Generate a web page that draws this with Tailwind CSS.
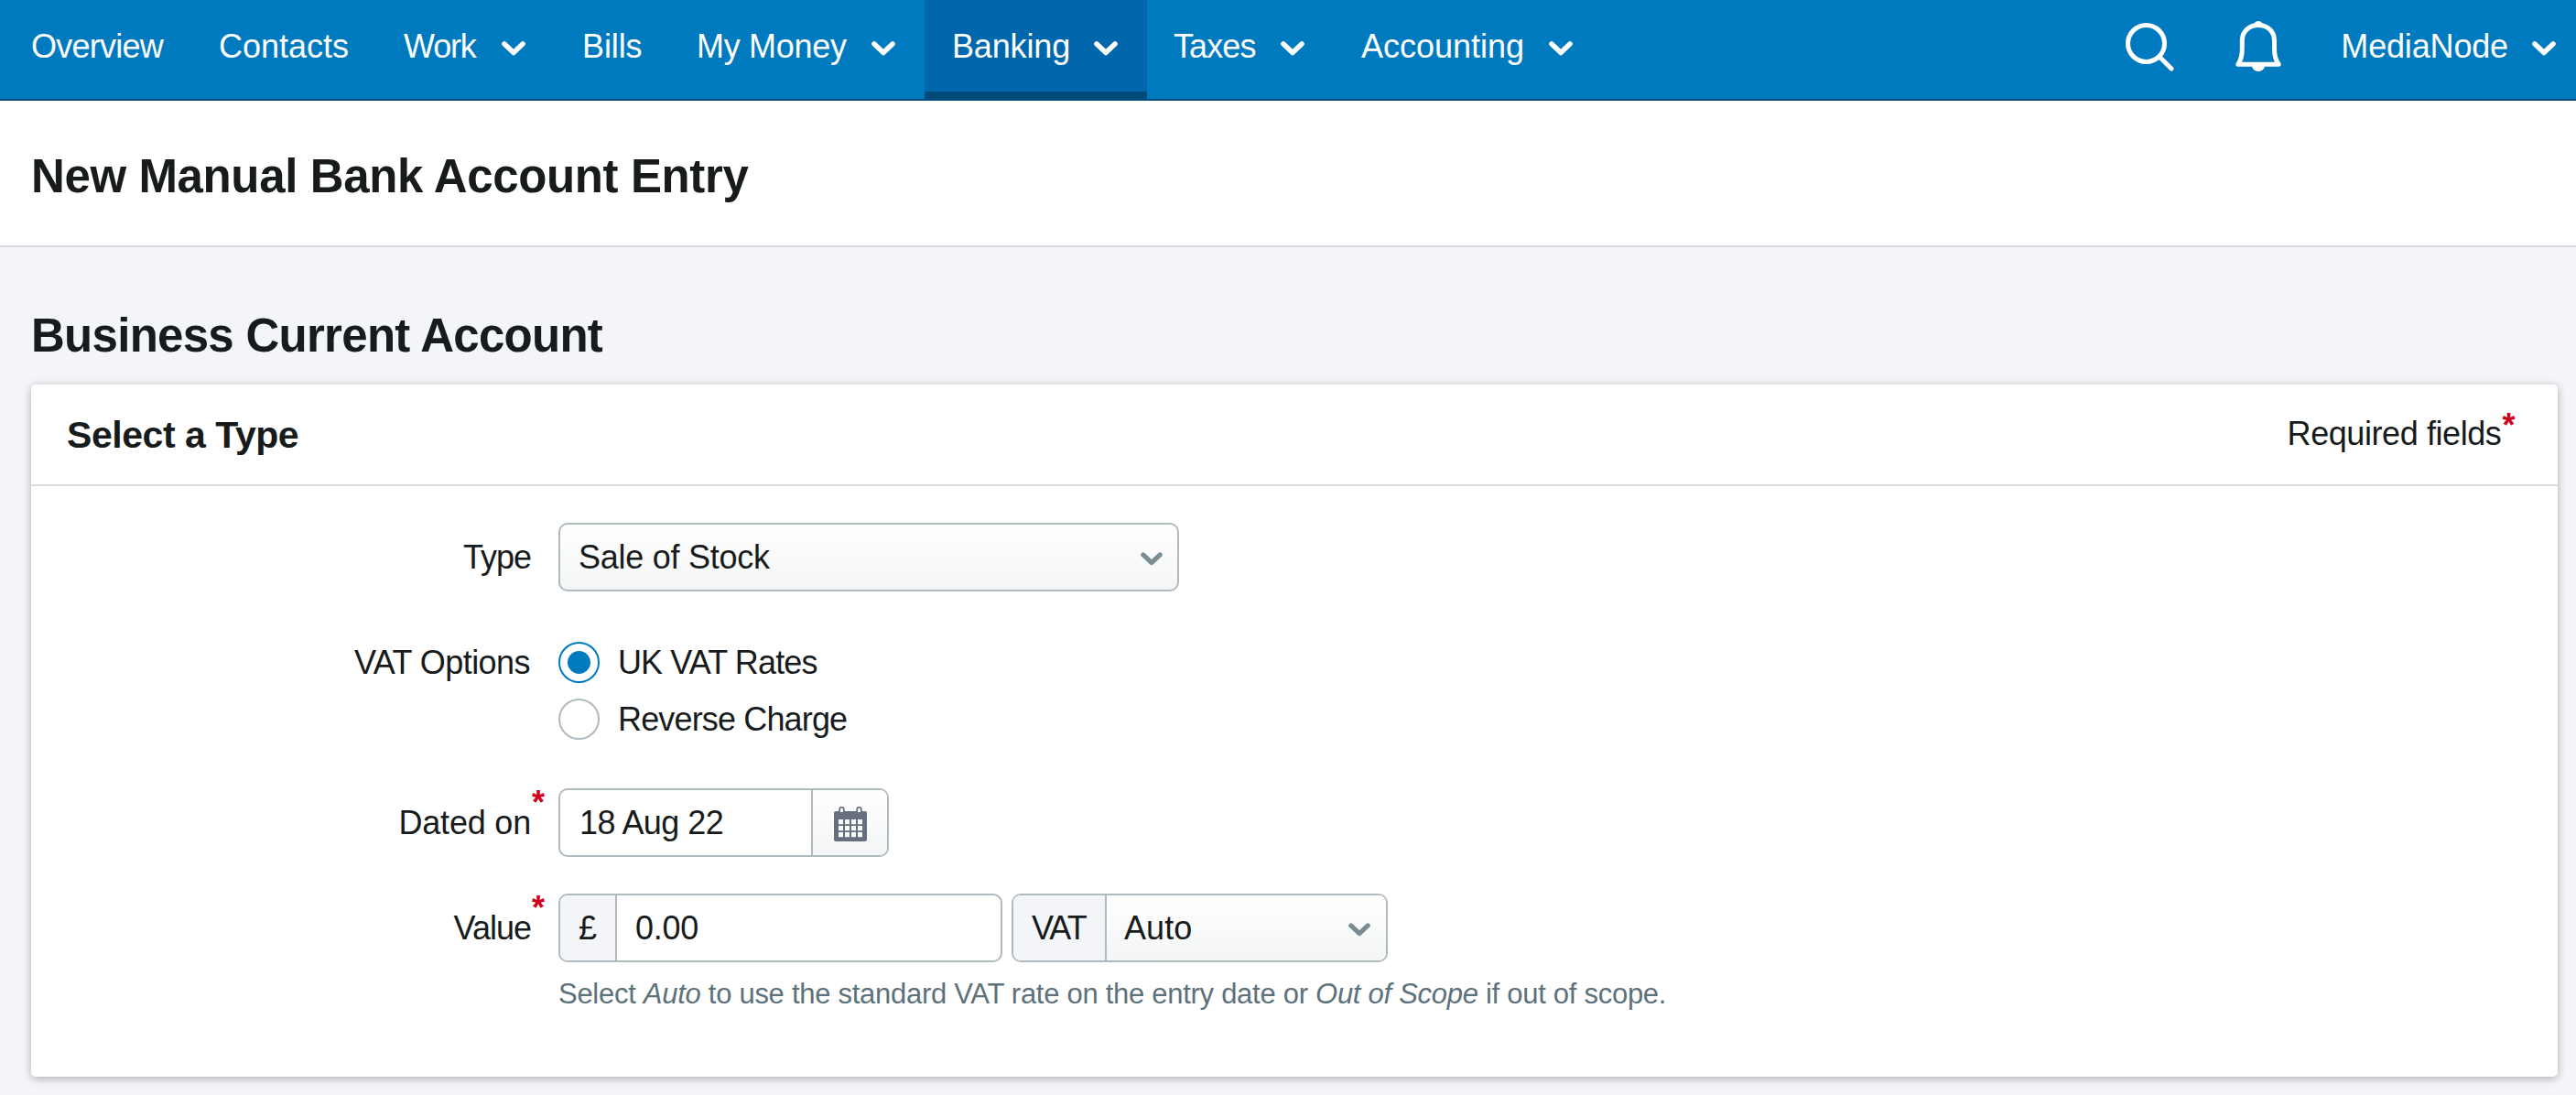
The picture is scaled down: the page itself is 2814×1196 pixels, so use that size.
<!DOCTYPE html>
<html lang="en">
<head>
    <meta charset="UTF-8">
    <meta name="viewport" content="width=device-width, initial-scale=1.0">
    <title>New Manual Bank Account Entry</title>
    <script src="https://cdn.jsdelivr.net/npm/@tailwindcss/browser@4"></script>
</head>
<body class="min-h-screen bg-[#f4f5f8] font-['Liberation_Sans',Arial,sans-serif] text-[36px] leading-none text-[#171b1c] whitespace-nowrap">

    <!-- Shared icons -->
    <svg class="hidden">
        <symbol id="chevron" viewBox="0 0 26 16">
            <path d="M3 3l10 9.500L23 3" fill="none" stroke="currentColor" stroke-width="5.500" stroke-linecap="round" stroke-linejoin="round"/>
        </symbol>
    </svg>

    <!-- Top navigation -->
    <nav class="flex h-[110px] justify-between border-b-2 border-[#004a7c] bg-[#007abf] pl-1 text-white">
        <div class="flex">
            <a href="#" class="flex h-[100px] w-[205px] items-center pt-0.5 pl-[30px] tracking-[-0.75px]">Overview</a>
            <a href="#" class="flex h-[100px] w-[203px] items-center pt-0.5 pl-[30px]">Contacts</a>
            <a href="#" class="flex h-[100px] w-[194px] items-center justify-between pt-0.5 pl-[29px] pr-8 tracking-[-1.2px]">Work <svg class="mt-[3px] h-4 w-[26px]"><use href="#chevron"/></svg></a>
            <a href="#" class="flex h-[100px] w-[125px] items-center pt-0.5 pl-[30px] tracking-[-0.1px]">Bills</a>
            <a href="#" class="flex h-[100px] w-[279px] items-center justify-between pt-0.5 pl-[30px] pr-8 tracking-[-0.3px]">My Money <svg class="mt-[3px] h-4 w-[26px]"><use href="#chevron"/></svg></a>
            <a href="#" class="box-content flex h-[98px] w-[181px] items-center justify-between border-b-8 border-[#004a7c] bg-[#0067ad] pt-0.5 pl-[30px] pr-8 tracking-[-0.15px]">Banking <svg class="mt-[3px] h-4 w-[26px]"><use href="#chevron"/></svg></a>
            <a href="#" class="flex h-[100px] w-[204px] items-center justify-between pt-0.5 pl-[29px] pr-8 tracking-[-0.9px]">Taxes <svg class="mt-[3px] h-4 w-[26px]"><use href="#chevron"/></svg></a>
            <a href="#" class="flex h-[100px] w-[291px] items-center justify-between pt-0.5 pl-[30px] pr-[30px]">Accounting <svg class="mt-[3px] h-4 w-[26px]"><use href="#chevron"/></svg></a>
        </div>
        <div class="flex h-[100px] items-center pr-[22px]">
            <svg class="mr-[66px] h-[56px] w-[54px]" viewBox="0 0 54 56" fill="none" stroke="currentColor" stroke-width="5" stroke-linecap="round">
                <circle cx="22.5" cy="25.5" r="20"/>
                <path d="M37.5 40.500L50 53"/>
            </svg>
            <svg class="mr-[65px] h-[56px] w-[50px]" viewBox="0 0 50 56">
                <path d="M2.800 48.200C6 44 7.300 38 7.300 31V22.500C7.300 12 15 5.500 25 5.500S42.500 12 42.500 22.500V31C42.500 38 44 44 47.200 48.200Z" fill="none" stroke="currentColor" stroke-width="5" stroke-linejoin="round"/>
                <path d="M20.500 4A4.700 4.300 0 0 1 29.500 4ZM18 50H32A7 6 0 0 1 18 50Z" fill="currentColor"/>
            </svg>
            <a href="#" class="flex items-center gap-[26px] pt-0.5 tracking-[-0.16px]">MediaNode <svg class="mt-[3px] h-4 w-[26px]"><use href="#chevron"/></svg></a>
        </div>
    </nav>

    <!-- Page title -->
    <header class="flex h-[160px] items-center border-b-2 border-[#d6dcdf] bg-white pt-[6px] pl-[34px]">
        <h1 class="text-[51px] font-bold tracking-[-0.38px]">New Manual Bank Account Entry</h1>
    </header>

    <main class="pt-[67px] pr-5 pl-[34px]">
        <h2 class="mb-[23px] text-[51px] leading-[60px] font-bold tracking-[-0.72px]">Business Current Account</h2>

        <section class="h-[756px] rounded-[5px] bg-white shadow-[0_2px_10px_rgba(0,0,0,0.3)]">
            <div class="flex h-[111px] items-center justify-between border-b-2 border-[#d6dce0] pr-[47px] pl-[39px]">
                <h3 class="pt-0.5 text-[41px] font-bold tracking-[-0.45px]">Select a Type</h3>
                <p class="flex pb-0.5 tracking-[-0.42px]">Required fields<span class="-mt-[9px] ml-px font-bold text-[#d0021b]">*</span></p>
            </div>

            <form class="pt-10">
                <!-- Type -->
                <div class="flex h-[75px] items-center">
                    <label class="w-[576px] pr-[30px] text-right tracking-[-1px]">Type</label>
                    <div class="flex h-full w-[678px] items-center justify-between rounded-[10px] border-2 border-[#b0bbc0] bg-linear-to-b from-white to-[#f4f5f6] pr-4 pl-5 tracking-[-0.25px]">
                        Sale of Stock
                        <svg class="mt-[3px] h-[15px] w-6 text-[#7b8b94]" viewBox="0 0 26 16"><use href="#chevron"/></svg>
                    </div>
                </div>

                <!-- VAT options -->
                <div class="mt-[55px] flex">
                    <label class="w-[576px] pr-[31px] text-right leading-[45px] tracking-[-0.55px]">VAT Options</label>
                    <div class="flex flex-col gap-[17px]">
                        <label class="flex h-[45px] items-center gap-5 tracking-[-0.88px]">
                            <span class="flex size-[45px] items-center justify-center rounded-full border-2 border-[#007abf]"><span class="size-[25px] rounded-full bg-[#007abf]"></span></span>
                            UK VAT Rates
                        </label>
                        <label class="flex h-[45px] items-center gap-5 tracking-[-0.85px]">
                            <span class="size-[45px] rounded-full border-2 border-[#b0bbc0]"></span>
                            Reverse Charge
                        </label>
                    </div>
                </div>

                <!-- Date -->
                <div class="mt-[53px] flex h-[75px] items-center">
                    <label class="relative w-[576px] pr-[30px] text-right tracking-[-0.2px]">Dated on<span class="absolute -top-[22px] right-[15px] font-bold tracking-normal text-[#d0021b]">*</span></label>
                    <div class="flex h-full w-[361px] overflow-hidden rounded-[10px] border-2 border-[#b0bbc0]">
                        <div class="flex w-[274px] items-center pl-[21px] tracking-[-0.55px]">18 Aug 22</div>
                        <div class="flex flex-1 items-center justify-center border-l-2 border-[#b0bbc0] bg-linear-to-b from-white to-[#f4f5f6]">
                            <svg class="mt-[2px] h-[38px] w-9 text-[#656f80]" viewBox="0 0 36 38">
                                <path d="M2 5H34A2 2 0 0 1 36 7V36A2 2 0 0 1 34 38H2A2 2 0 0 1 0 36V7A2 2 0 0 1 2 5Z" fill="currentColor"/>
                                <path d="M6.200 7V3A2.300 2.300 0 0 1 10.800 3V7ZM25.200 7V3A2.300 2.300 0 0 1 29.800 3V7Z" fill="#fff" stroke="currentColor" stroke-width="1.800"/>
                                <path d="M5 14h5v5.200H5zM12 14h5v5.200H12zM19 14h5v5.200H19zM26 14h5v5.200H26zM5 21h5v5.200H5zM12 21h5v5.200H12zM19 21h5v5.200H19zM26 21h5v5.200H26zM5 28h5v5.200H5zM12 28h5v5.200H12zM19 28h5v5.200H19zM26 28h5v5.200H26z" fill="#fafbfb"/>
                            </svg>
                        </div>
                    </div>
                </div>

                <!-- Value -->
                <div class="mt-10 flex h-[75px] items-center">
                    <label class="relative w-[576px] pr-[30px] text-right tracking-[-1px]">Value<span class="absolute -top-[22px] right-[15px] font-bold tracking-normal text-[#d0021b]">*</span></label>
                    <div class="flex h-full w-[485px] overflow-hidden rounded-[10px] border-2 border-[#b0bbc0]">
                        <div class="flex w-[62px] items-center justify-center border-r-2 border-[#b0bbc0] bg-[#f4f5f8]">£</div>
                        <div class="flex flex-1 items-center pl-5 tracking-[-0.25px]">0.00</div>
                    </div>
                    <div class="ml-2.5 flex h-full w-[411px] overflow-hidden rounded-[10px] border-2 border-[#b0bbc0]">
                        <div class="flex w-[102px] items-center border-r-2 border-[#b0bbc0] bg-[#f4f5f8] pl-5 tracking-[-2px]">VAT</div>
                        <div class="flex flex-1 items-center justify-between bg-linear-to-b from-white to-[#f4f5f6] pr-[17px] pl-[19px] tracking-[0.1px]">
                            Auto
                            <svg class="mt-[3px] h-[15px] w-6 text-[#7b8b94]" viewBox="0 0 26 16"><use href="#chevron"/></svg>
                        </div>
                    </div>
                </div>

                <p class="mt-[19px] ml-[576px] text-[31px] tracking-[-0.28px] text-[#5d717b]">Select <em>Auto</em> to use the standard VAT rate on the entry date or <em>Out of Scope</em> if out of scope.</p>
            </form>
        </section>
    </main>
</body>
</html>
